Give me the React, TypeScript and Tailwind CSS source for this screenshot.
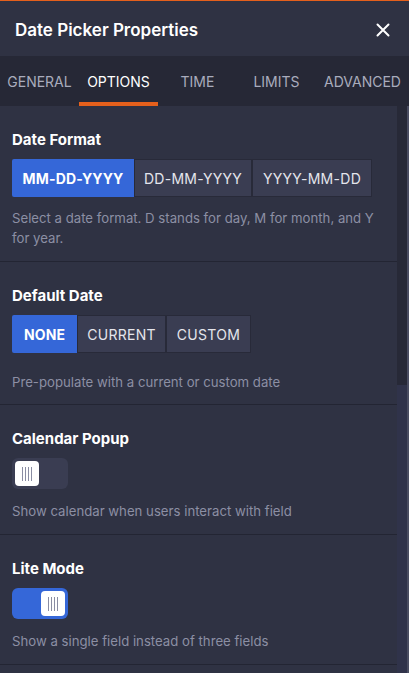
import React from "react";

const font = { fontFamily: "Inter, 'Noto Sans', sans-serif" };

function Segmented({ options, active, widths }: { options: string[]; active: number; widths: number[] }) {
  return (
    <div className="flex h-[38px]">
      {options.map((o, i) => (
        <div
          key={o}
          style={{ width: widths[i] }}
          className={
            i === active
              ? "flex items-center justify-center bg-[#3567d8] text-white font-bold text-[14px] tracking-[0.01em] rounded-l-[2px]"
              : "flex items-center justify-center bg-[#3a3d52] border border-[#282a39] text-[#e4e5ec] text-[14px] tracking-[0.02em]"
          }
        >
          {o}
        </div>
      ))}
    </div>
  );
}

function Knob() {
  return (
    <div className="w-[24px] h-[25px] bg-white rounded-[4px] flex items-center justify-center gap-[1.7px]">
      <div className="w-[1px] h-[14px] bg-[#8a8da3]" />
      <div className="w-[1px] h-[14px] bg-[#8a8da3]" />
      <div className="w-[1px] h-[14px] bg-[#8a8da3]" />
      <div className="w-[1px] h-[14px] bg-[#8a8da3]" />
    </div>
  );
}

function Toggle({ on }: { on: boolean }) {
  return (
    <div
      className={
        on
          ? "w-[56px] h-[31px] rounded-[6px] bg-[#3567d8] flex items-center justify-end px-[3px]"
          : "w-[56px] h-[31px] rounded-[6px] bg-[#3a3d52] flex items-center justify-start px-[3px]"
      }
    >
      <Knob />
    </div>
  );
}

export default function App() {
  const tabs = ["GENERAL", "OPTIONS", "TIME", "LIMITS", "ADVANCED"];
  return (
    <div style={font} className="w-[409px] h-[673px] overflow-hidden bg-[#2f3243] flex flex-col">
      <div className="h-[56px] shrink-0 border-t border-[#e5601c] flex items-center justify-between pl-[15px] pr-[19px] pt-[2px]">
        <div className="text-white text-[17px] font-semibold pt-[2px]">Date Picker Properties</div>
        <svg width="14" height="14" viewBox="0 0 14 14">
          <path d="M1.5 1.5 L12.5 12.5 M12.5 1.5 L1.5 12.5" stroke="white" strokeWidth="2" strokeLinecap="round" />
        </svg>
      </div>
      <div className="h-[50px] shrink-0 bg-[#262836] flex">
        {tabs.map((t, i) => (
          <div
            key={t}
            className={
              (i === 4 ? "flex-1 " : "w-[79px] ") +
              "relative flex items-center justify-center text-[14px] " +
              (i === 1 ? "text-white" : "text-[#a9acbd]")
            }
          >
            {t}
            {i === 1 && <div className="absolute left-0 right-0 bottom-0 h-[4px] bg-[#e5601c]" />}
          </div>
        ))}
      </div>
      <div className="flex flex-1 min-h-0">
        <div className="w-[397px] flex flex-col">
          <div className="pt-[24px] pb-[13px] px-[12px] border-b border-[#232533]">
            <div className="text-white text-[15px] font-bold leading-[20px]">Date Format</div>
            <div className="mt-[9px]">
              <Segmented options={["MM-DD-YYYY", "DD-MM-YYYY", "YYYY-MM-DD"]} active={0} widths={[122, 118, 120]} />
            </div>
            <div className="mt-[11px] text-[13.2px] leading-[20px] text-[#8c8fa4]">
              Select a date format. D stands for day, M for month, and Y for year.
            </div>
          </div>
          <div className="pt-[24px] pb-[12px] px-[12px] border-b border-[#232533]">
            <div className="text-white text-[15px] font-bold leading-[20px]">Default Date</div>
            <div className="mt-[9px]">
              <Segmented options={["NONE", "CURRENT", "CUSTOM"]} active={0} widths={[65, 89, 85]} />
            </div>
            <div className="mt-[19px] text-[13.2px] leading-[20px] text-[#8c8fa4]">
              Pre-populate with a current or custom date
            </div>
          </div>
          <div className="pt-[24px] pb-[13px] px-[12px] border-b border-[#232533]">
            <div className="text-white text-[15px] font-bold leading-[20px]">Calendar Popup</div>
            <div className="mt-[9px]">
              <Toggle on={false} />
            </div>
            <div className="mt-[12px] text-[13.2px] leading-[20px] text-[#8c8fa4]">
              Show calendar when users interact with field
            </div>
          </div>
          <div className="pt-[24px] pb-[13px] px-[12px] border-b border-[#232533]">
            <div className="text-white text-[15px] font-bold leading-[20px]">Lite Mode</div>
            <div className="mt-[9px]">
              <Toggle on={true} />
            </div>
            <div className="mt-[12px] text-[13.2px] leading-[20px] text-[#8c8fa4]">
              Show a single field instead of three fields
            </div>
          </div>
          <div className="flex-1" />
        </div>
        <div className="w-[10px] flex flex-col bg-[#272937]">
          <div className="h-[279px]" />
          <div className="flex-1 bg-[#30334a]" />
        </div>
        <div className="w-[2px] bg-[#4a4d61]" />
      </div>
    </div>
  );
}
